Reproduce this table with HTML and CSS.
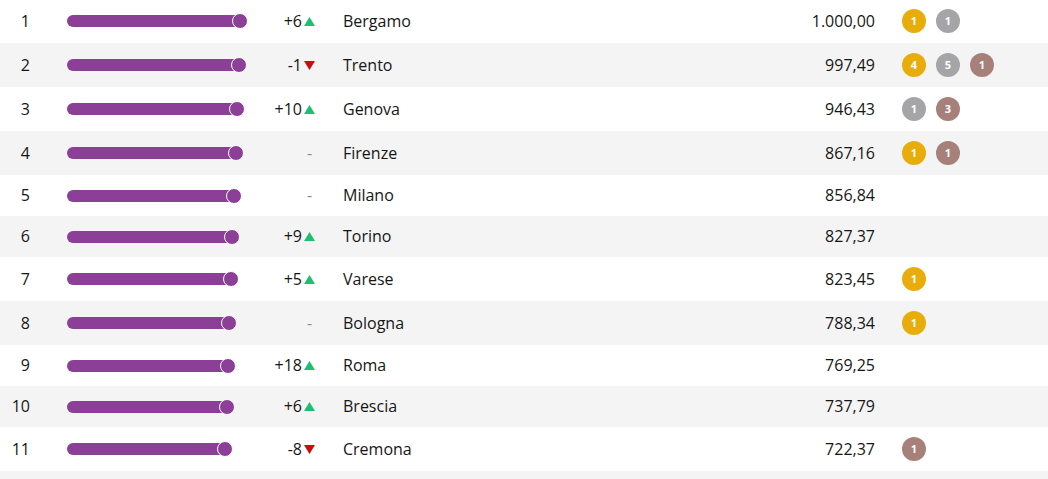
FILE: index.html
```html
<!DOCTYPE html>
<html lang="it">
<head>
<meta charset="utf-8">
<title>Classifica</title>
<link rel="stylesheet" href="styles.css">
</head>
<body>
<div class="table">
  <div class="row medals-row">
    <div class="rank">1</div>
    <div class="barcell"><div class="fill" style="width:174px"></div><div class="knob"></div></div>
    <div class="delta">+6<svg class="tri up" viewBox="0 0 11 9"><polygon points="5.5,0 11,9 0,9"/></svg></div>
    <div class="city">Bergamo</div>
    <div class="score">1.000,00</div>
    <div class="medals"><span class="m gold">1</span><span class="m silver">1</span></div>
  </div>
  <div class="row alt medals-row">
    <div class="rank">2</div>
    <div class="barcell"><div class="fill" style="width:172px"></div><div class="knob"></div></div>
    <div class="delta">-1<svg class="tri down" viewBox="0 0 11 9"><polygon points="0,0 11,0 5.5,9"/></svg></div>
    <div class="city">Trento</div>
    <div class="score">997,49</div>
    <div class="medals"><span class="m gold">4</span><span class="m silver">5</span><span class="m bronze">1</span></div>
  </div>
  <div class="row medals-row">
    <div class="rank">3</div>
    <div class="barcell"><div class="fill" style="width:170px"></div><div class="knob"></div></div>
    <div class="delta">+10<svg class="tri up" viewBox="0 0 11 9"><polygon points="5.5,0 11,9 0,9"/></svg></div>
    <div class="city">Genova</div>
    <div class="score">946,43</div>
    <div class="medals"><span class="m silver">1</span><span class="m bronze">3</span></div>
  </div>
  <div class="row alt medals-row">
    <div class="rank">4</div>
    <div class="barcell"><div class="fill" style="width:169px"></div><div class="knob"></div></div>
    <div class="delta"><span class="dash">-</span></div>
    <div class="city">Firenze</div>
    <div class="score">867,16</div>
    <div class="medals"><span class="m gold">1</span><span class="m bronze">1</span></div>
  </div>
  <div class="row">
    <div class="rank">5</div>
    <div class="barcell"><div class="fill" style="width:167px"></div><div class="knob"></div></div>
    <div class="delta"><span class="dash">-</span></div>
    <div class="city">Milano</div>
    <div class="score">856,84</div>
    <div class="medals"></div>
  </div>
  <div class="row alt">
    <div class="rank">6</div>
    <div class="barcell"><div class="fill" style="width:165px"></div><div class="knob"></div></div>
    <div class="delta">+9<svg class="tri up" viewBox="0 0 11 9"><polygon points="5.5,0 11,9 0,9"/></svg></div>
    <div class="city">Torino</div>
    <div class="score">827,37</div>
    <div class="medals"></div>
  </div>
  <div class="row medals-row">
    <div class="rank">7</div>
    <div class="barcell"><div class="fill" style="width:164px"></div><div class="knob"></div></div>
    <div class="delta">+5<svg class="tri up" viewBox="0 0 11 9"><polygon points="5.5,0 11,9 0,9"/></svg></div>
    <div class="city">Varese</div>
    <div class="score">823,45</div>
    <div class="medals"><span class="m gold">1</span></div>
  </div>
  <div class="row alt medals-row">
    <div class="rank">8</div>
    <div class="barcell"><div class="fill" style="width:162px"></div><div class="knob"></div></div>
    <div class="delta"><span class="dash">-</span></div>
    <div class="city">Bologna</div>
    <div class="score">788,34</div>
    <div class="medals"><span class="m gold">1</span></div>
  </div>
  <div class="row">
    <div class="rank">9</div>
    <div class="barcell"><div class="fill" style="width:161px"></div><div class="knob"></div></div>
    <div class="delta">+18<svg class="tri up" viewBox="0 0 11 9"><polygon points="5.5,0 11,9 0,9"/></svg></div>
    <div class="city">Roma</div>
    <div class="score">769,25</div>
    <div class="medals"></div>
  </div>
  <div class="row alt">
    <div class="rank">10</div>
    <div class="barcell"><div class="fill" style="width:160px"></div><div class="knob"></div></div>
    <div class="delta">+6<svg class="tri up" viewBox="0 0 11 9"><polygon points="5.5,0 11,9 0,9"/></svg></div>
    <div class="city">Brescia</div>
    <div class="score">737,79</div>
    <div class="medals"></div>
  </div>
  <div class="row medals-row">
    <div class="rank">11</div>
    <div class="barcell"><div class="fill" style="width:158px"></div><div class="knob"></div></div>
    <div class="delta">-8<svg class="tri down" viewBox="0 0 11 9"><polygon points="0,0 11,0 5.5,9"/></svg></div>
    <div class="city">Cremona</div>
    <div class="score">722,37</div>
    <div class="medals"><span class="m bronze">1</span></div>
  </div>
  <div class="row alt">
    <div class="rank"></div>
    <div class="barcell"></div>
    <div class="delta"></div>
    <div class="city"></div>
    <div class="score"></div>
    <div class="medals"></div>
  </div>
</div>
</body>
</html>
```

FILE: styles.css
```css
html, body {
  margin: 0;
  padding: 0;
  background: #ffffff;
}
body {
  font-family: "Open Sans", "Liberation Sans", sans-serif;
  font-size: 16px;
  color: #161616;
  overflow: hidden;
}
.table {
  margin-top: -1px;
}
.row {
  display: grid;
  grid-template-columns: 30px 218px 67px 1fr 80px 173px;
  align-items: center;
  padding: 10px 0;
  line-height: 21px;
  background: #ffffff;
}
.row.alt {
  background: #f4f4f4;
}
.row.medals-row {
  min-height: 24px;
}
.rank {
  text-align: right;
}
.barcell {
  display: flex;
  align-items: center;
  padding-left: 37px;
  height: 17px;
}
.fill {
  height: 12px;
  background: #8c3f97;
  border-radius: 6px;
}
.knob {
  width: 14px;
  height: 14px;
  border: 1.5px solid #ffffff;
  border-radius: 50%;
  background: #8c3f97;
  margin-left: -8.5px;
  flex: none;
}
.delta {
  display: flex;
  justify-content: flex-end;
  align-items: center;
}
.tri {
  width: 11px;
  height: 9px;
  margin-left: 2px;
}
.tri.up polygon { fill: #1fbf72; }
.tri.down polygon { fill: #cc0c0c; }
.dash {
  color: #8a8a8a;
  width: 11px;
  text-align: center;
}
.city {
  padding-left: 28px;
}
.score {
  text-align: right;
}
.medals {
  display: flex;
  gap: 10px;
  padding-left: 27px;
}
.m {
  width: 24px;
  height: 24px;
  border-radius: 50%;
  color: #ffffff;
  font-size: 11px;
  font-weight: 700;
  line-height: 24px;
  text-align: center;
}
.m.gold { background: #e8ad0b; }
.m.silver { background: #a5a5a8; }
.m.bronze { background: #a7807a; }
```
